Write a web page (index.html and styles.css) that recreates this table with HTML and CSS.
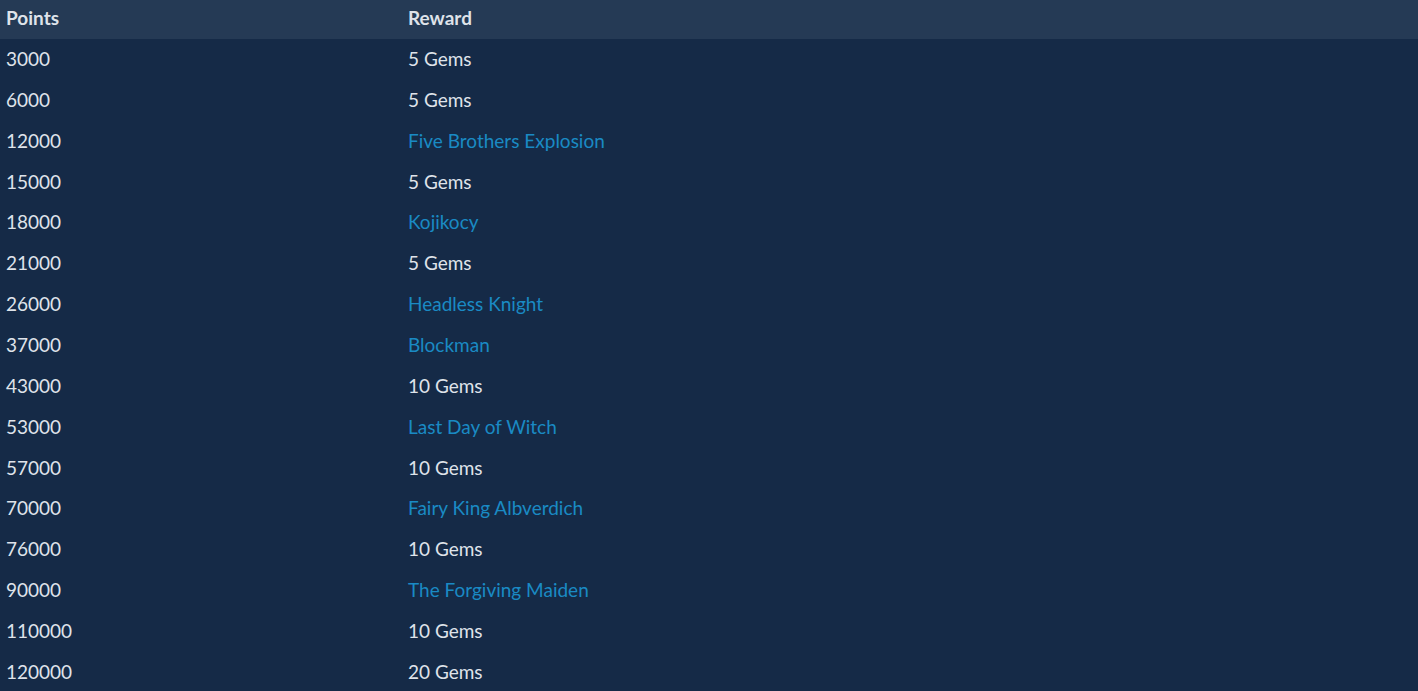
FILE: index.html
```html
<!DOCTYPE html>
<html lang="en">
<head>
  <meta charset="UTF-8">
  <title>Point Rewards</title>
  <link rel="stylesheet" href="styles.css">
</head>
<body>
  <table class="rewards">
    <thead>
      <tr>
        <th class="col-points">Points</th>
        <th>Reward</th>
      </tr>
    </thead>
    <tbody>
      <tr><td>3000</td><td>5 Gems</td></tr>
      <tr><td>6000</td><td>5 Gems</td></tr>
      <tr><td>12000</td><td><a href="#">Five Brothers Explosion</a></td></tr>
      <tr><td>15000</td><td>5 Gems</td></tr>
      <tr><td>18000</td><td><a href="#">Kojikocy</a></td></tr>
      <tr><td>21000</td><td>5 Gems</td></tr>
      <tr><td>26000</td><td><a href="#">Headless Knight</a></td></tr>
      <tr><td>37000</td><td><a href="#">Blockman</a></td></tr>
      <tr><td>43000</td><td>10 Gems</td></tr>
      <tr><td>53000</td><td><a href="#">Last Day of Witch</a></td></tr>
      <tr><td>57000</td><td>10 Gems</td></tr>
      <tr><td>70000</td><td><a href="#">Fairy King Albverdich</a></td></tr>
      <tr><td>76000</td><td>10 Gems</td></tr>
      <tr><td>90000</td><td><a href="#">The Forgiving Maiden</a></td></tr>
      <tr><td>110000</td><td>10 Gems</td></tr>
      <tr><td>120000</td><td>20 Gems</td></tr>
    </tbody>
  </table>
</body>
</html>
```

FILE: styles.css
```css
body {
  margin: 0;
  background-color: #152a47;
  font-family: Lato, "Open Sans", sans-serif;
  color: #dfe3ea;
}

.rewards {
  width: 100%;
  border-collapse: collapse;
  font-size: 19px;
}

.rewards th {
  background-color: #253a55;
  text-align: left;
  font-weight: bold;
  height: 39px;
  padding: 0 6px 4px;
  box-sizing: border-box;
}

.rewards .col-points {
  width: 402px;
}

.rewards td {
  height: 40.87px;
  padding: 0 6px 2px;
  box-sizing: border-box;
}

.rewards a {
  color: #1a8ac4;
  text-decoration: none;
}
```
